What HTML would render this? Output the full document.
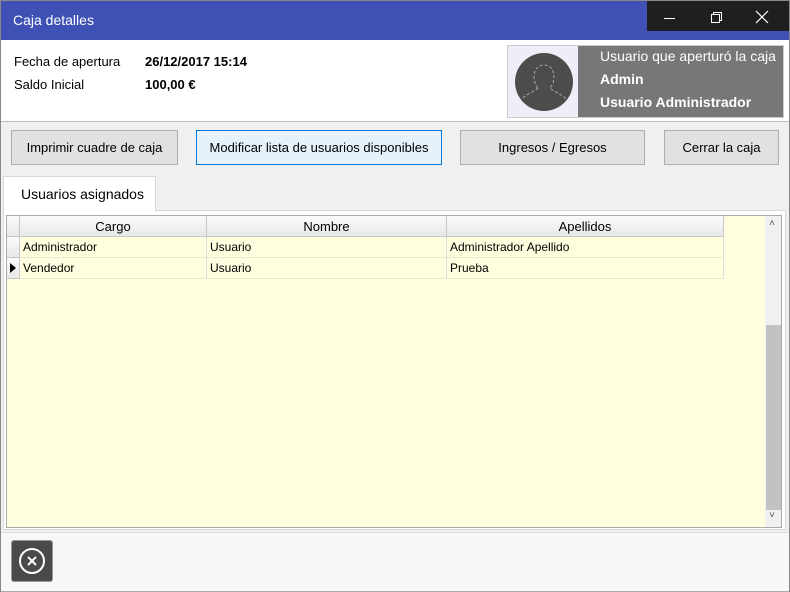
<!DOCTYPE html><html><head><style>
body{margin:0;width:790px;height:592px;position:relative;font-family:"Liberation Sans",sans-serif;font-size:13px;background:#f0f0f0;overflow:hidden}
.a{position:absolute}
.btn{position:absolute;top:130px;height:35px;background:#e1e1e1;border:1px solid #adadad;box-sizing:border-box;text-align:center;line-height:34px;font-size:13px;color:#000}
.c{position:absolute;height:21px;line-height:21px;box-sizing:border-box;border-right:1px solid #ddd;border-bottom:1px solid #e8e8d0;padding-left:3px;font-size:12px}
.h{background:linear-gradient(#fbfbfb,#e8e8e8);border-right:1px solid #c8c8c8;border-bottom:1px solid #c8c8c8;text-align:center;padding:0;font-size:13px}
</style></head><body>
<div class="a" style="left:0;top:0;width:790px;height:592px;border:1px solid #888;box-sizing:border-box"></div>
<div class="a" style="left:1px;top:1px;width:788px;height:39px;background:#3f51b5"></div>
<div class="a" style="left:13px;top:12px;color:#fff;font-size:14px">Caja detalles</div>
<div class="a" style="left:647px;top:1px;width:142px;height:30px;background:#1f1f1f"></div>
<div class="a" style="left:664px;top:18px;width:11px;height:1px;background:#fff"></div>
<div class="a" style="left:713px;top:12px;width:7px;height:7px;border:1px solid #fff"></div>
<div class="a" style="left:711px;top:14px;width:7px;height:7px;border:1px solid #fff;background:#1f1f1f"></div>
<svg class="a" style="left:755px;top:10px" width="14" height="14"><path d="M1 1L13 13M13 1L1 13" stroke="#fff" stroke-width="1.2"/></svg>
<div class="a" style="left:1px;top:40px;width:788px;height:81px;background:#fff;border-bottom:1px solid #bbb"></div>
<div class="a" style="left:14px;top:54px">Fecha de apertura</div>
<div class="a" style="left:145px;top:54px;font-weight:bold">26/12/2017 15:14</div>
<div class="a" style="left:14px;top:77px">Saldo Inicial</div>
<div class="a" style="left:145px;top:77px;font-weight:bold">100,00 €</div>
<div class="a" style="left:507px;top:45px;width:277px;height:73px;background:#777;border:1px solid #ccc;box-sizing:border-box"></div>
<div class="a" style="left:508px;top:46px;width:70px;height:71px;background:#eeeef8"></div>
<svg class="a" style="left:514px;top:52px" width="60" height="60"><circle cx="30" cy="30" r="29" fill="#4a4d4a"/><path d="M24 36 C18 30 18 13 30 13 C42 13 42 30 36 36 C40 40 48 42 52 47 M24 36 C20 40 12 42 8 47" stroke="#aaa" stroke-dasharray="3 2" fill="none"/></svg>
<div class="a" style="left:600px;top:48px;color:#fff;font-size:14px">Usuario que aperturó la caja</div>
<div class="a" style="left:600px;top:71px;color:#fff;font-size:14px;font-weight:bold">Admin</div>
<div class="a" style="left:600px;top:94px;color:#fff;font-size:14px;font-weight:bold">Usuario Administrador</div>
<div class="btn" style="left:11px;width:167px">Imprimir cuadre de caja</div>
<div class="btn" style="left:196px;width:246px;background:#e5f1fb;border-color:#0078d7">Modificar lista de usuarios disponibles</div>
<div class="btn" style="left:460px;width:185px">Ingresos / Egresos</div>
<div class="btn" style="left:664px;width:115px">Cerrar la caja</div>
<div class="a" style="left:3px;top:210px;width:783px;height:320px;background:#fff;border:1px solid #d9d9d9;box-sizing:border-box"></div>
<div class="a" style="left:3px;top:176px;width:153px;height:36px;background:#fff;border:1px solid #d9d9d9;border-bottom:none;box-sizing:border-box"></div>
<div class="a" style="left:21px;top:186px;font-size:14px">Usuarios asignados</div>
<div class="a" style="left:6px;top:215px;width:776px;height:313px;background:#ffffe0;border:1px solid #aaa;box-sizing:border-box"></div>
<div class="c h" style="left:7px;top:216px;width:13px"></div>
<div class="c h" style="left:20px;top:216px;width:187px">Cargo</div>
<div class="c h" style="left:207px;top:216px;width:240px">Nombre</div>
<div class="c h" style="left:447px;top:216px;width:277px">Apellidos</div>
<div class="c h" style="left:7px;top:237px;width:13px"></div>
<div class="c h" style="left:7px;top:258px;width:13px"></div>
<svg class="a" style="left:10px;top:263px" width="6" height="10"><path d="M0 0L6 5L0 10Z" fill="#000"/></svg>
<div class="c" style="left:20px;top:237px;width:187px">Administrador</div>
<div class="c" style="left:207px;top:237px;width:240px">Usuario</div>
<div class="c" style="left:447px;top:237px;width:277px">Administrador Apellido</div>
<div class="c" style="left:20px;top:258px;width:187px">Vendedor</div>
<div class="c" style="left:207px;top:258px;width:240px">Usuario</div>
<div class="c" style="left:447px;top:258px;width:277px">Prueba</div>
<div class="a" style="left:765px;top:216px;width:16px;height:311px;background:#f0f0f0"></div>
<div class="a" style="left:766px;top:325px;width:15px;height:185px;background:#c2c2c2"></div>
<div class="a" style="left:769px;top:218px;font-size:10px;color:#555">˄</div>
<div class="a" style="left:769px;top:510px;font-size:10px;color:#555">˅</div>
<div class="a" style="left:1px;top:532px;width:788px;height:58px;background:#f8f8f8;border-top:1px solid #ddd;border-bottom:1px solid #aaa"></div>
<div class="a" style="left:11px;top:540px;width:42px;height:42px;background:#4a4a4a;border:1px solid #999;border-radius:3px;box-sizing:border-box"></div>
<svg class="a" style="left:11px;top:540px" width="42" height="42"><circle cx="21" cy="21" r="12" fill="none" stroke="#fff" stroke-width="2"/><path d="M17 17L25 25M25 17L17 25" stroke="#fff" stroke-width="2"/></svg>
</body></html>
